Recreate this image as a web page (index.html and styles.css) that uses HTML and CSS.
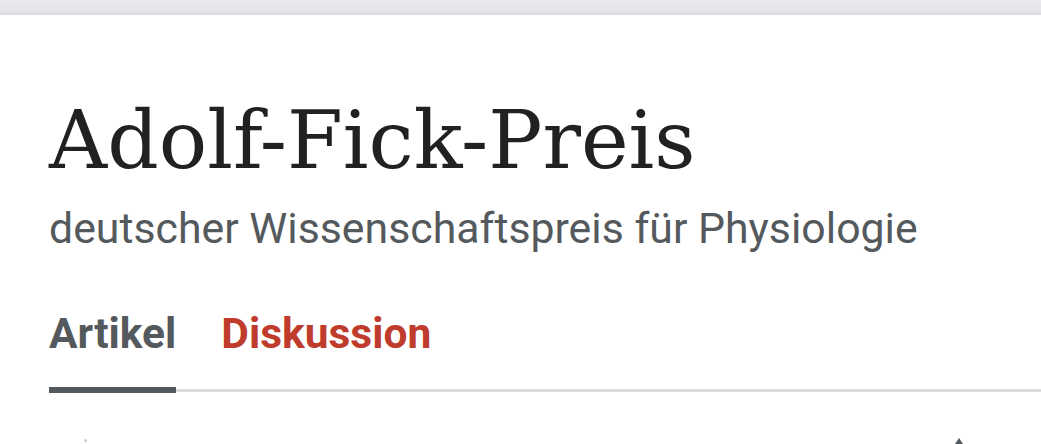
FILE: index.html
```html
<!DOCTYPE html>
<html lang="de">
<head>
<meta charset="utf-8">
<title>Adolf-Fick-Preis</title>
<link rel="stylesheet" href="styles.css">
</head>
<body>
<div class="topbar"></div>
<main class="page">
  <header class="heading">
    <h1 class="title">Adolf-Fick-Preis</h1>
    <p class="tagline">deutscher Wissenschaftspreis für Physiologie</p>
  </header>
  <nav class="tabs">
    <a class="tab tab-active">Artikel</a>
    <a class="tab tab-new">Diskussion</a>
  </nav>
  <div class="toolbar">
    <span class="tool-dot"></span>
    <span class="tool-up"></span>
  </div>
</main>
</body>
</html>
```
FILE: styles.css
```css
html, body {
  margin: 0;
  padding: 0;
  background: #ffffff;
}
.topbar {
  height: 15px;
  background: linear-gradient(#e9eaee, #e4e5e9 80%, #d9dade);
}
.page {
  padding-left: 49px;
  overflow: hidden;
}
.heading {
  padding-top: 75px;
}
.title {
  margin: 0;
  font-family: "DejaVu Serif", serif;
  font-weight: normal;
  font-size: 80.5px;
  line-height: 100px;
  color: #202122;
}
.tagline {
  margin: 8px 0 0;
  font-family: Roboto, sans-serif;
  font-size: 42.8px;
  line-height: 60px;
  color: #54595d;
}
.tabs {
  margin-top: 51px;
  display: flex;
  align-items: flex-start;
  gap: 45px;
  border-bottom: 3px solid #d8dbde;
}
.tab {
  font-family: Roboto, sans-serif;
  font-weight: bold;
  font-size: 42.5px;
  line-height: 50px;
}
.tab-active {
  color: #54595d;
  padding-bottom: 28px;
  border-bottom: 6px solid #54595d;
  margin-bottom: -4px;
}
.tab-new {
  color: #bf3b2b;
}
.toolbar {
  height: 52px;
  display: flex;
  align-items: flex-end;
  justify-content: space-between;
  padding-right: 78px;
}
.tool-dot {
  width: 3px;
  height: 3px;
  margin-left: 35px;
  margin-bottom: 2px;
  border-radius: 50%;
  background: #c8ccd1;
}
.tool-up {
  width: 0;
  height: 0;
  border-left: 4px solid transparent;
  border-right: 4px solid transparent;
  border-bottom: 6px solid #54595d;
}
```
